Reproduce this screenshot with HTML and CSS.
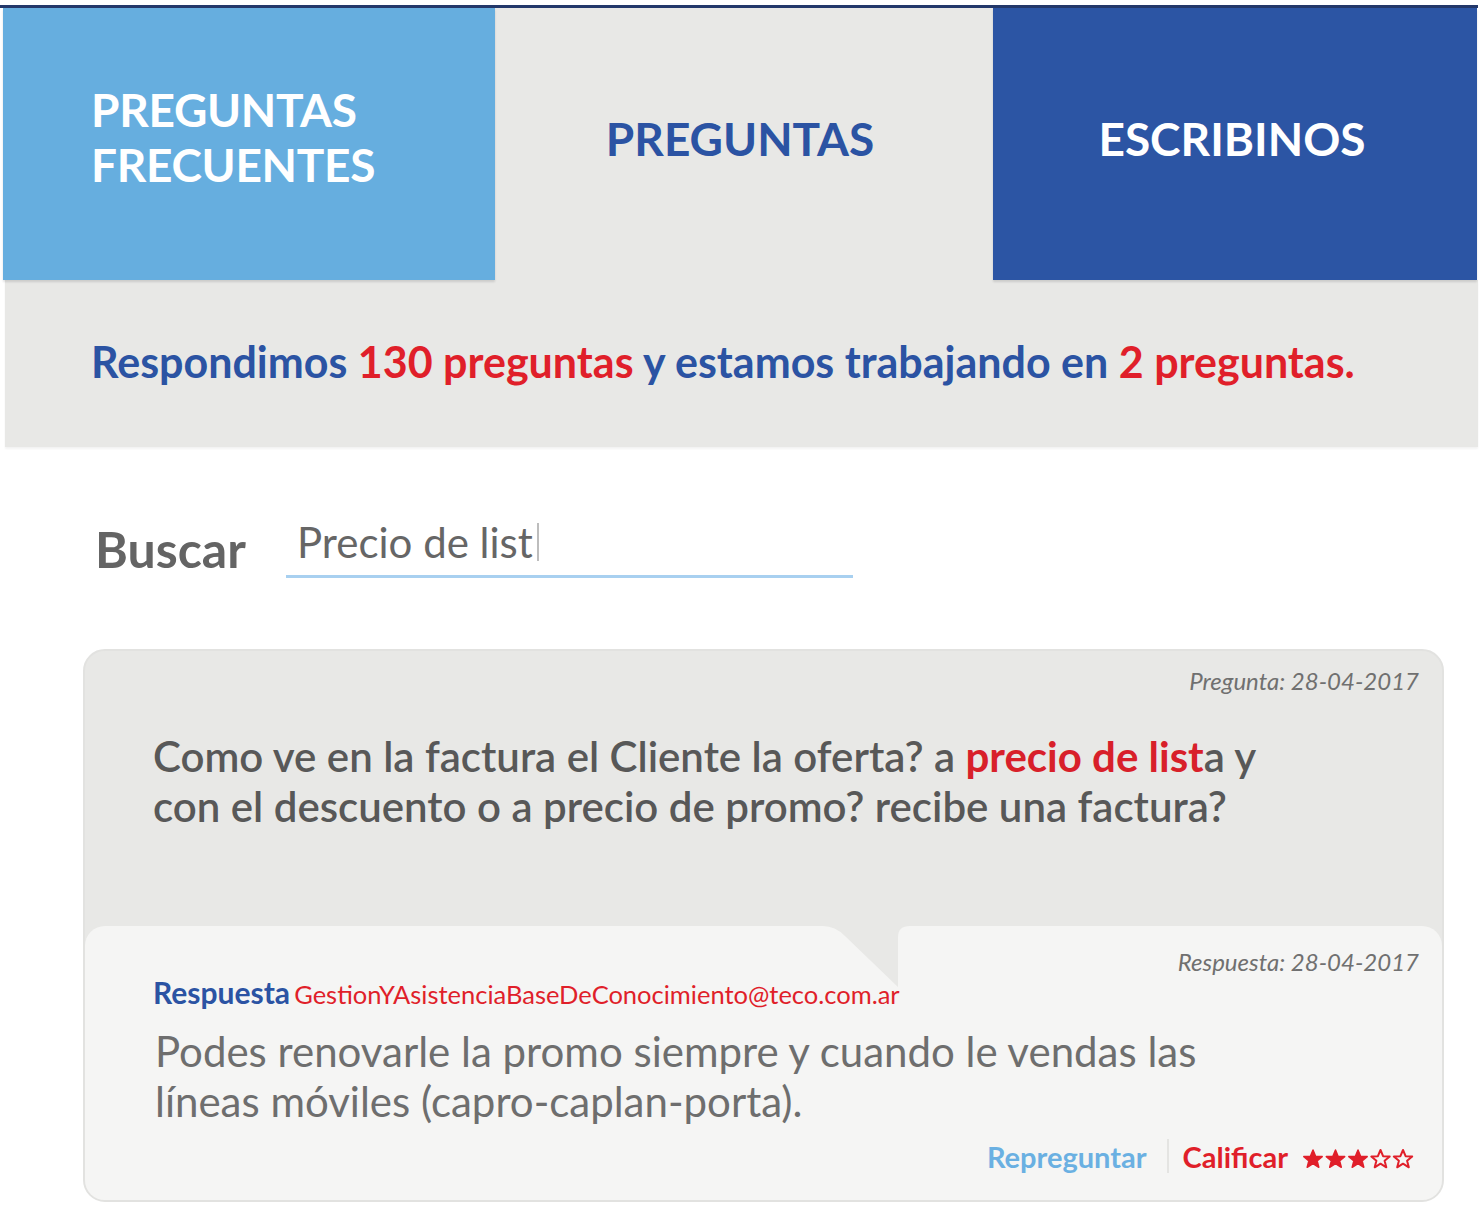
FILE: index.html
```html
<!DOCTYPE html>
<html lang="es">
<head>
<meta charset="utf-8">
<title>Preguntas</title>
<link rel="stylesheet" href="styles.css">
</head>
<body>
<div class="page">
  <div class="topline"></div>
  <nav class="tabs">
    <div class="tab tab-faq">PREGUNTAS<br>FRECUENTES</div>
    <div class="tab tab-questions">PREGUNTAS</div>
    <div class="tab tab-write">ESCRIBINOS</div>
  </nav>
  <div class="banner">
    <p class="banner-text">Respondimos <span class="red">130 preguntas</span> y estamos trabajando en <span class="red">2 preguntas.</span></p>
  </div>
  <div class="search">
    <span class="search-label">Buscar</span>
    <div class="search-field"><span class="search-value">Precio de list</span><span class="caret"></span></div>
  </div>
  <article class="card">
    <section class="question">
      <div class="date">Pregunta: 28-04-2017</div>
      <p class="question-text">Como ve en la factura el Cliente la oferta? a <span class="hl">precio de list</span>a y con el descuento o a precio de promo? recibe una factura?</p>
    </section>
    <section class="answer">
      <svg class="tail" width="90" height="62" viewBox="0 0 90 62"><path d="M0 0 Q12 0 22 10 L75 61 L75 11 Q75 0 87 0 Z" fill="#e8e8e6"/></svg>
      <div class="date date-answer">Respuesta: 28-04-2017</div>
      <div class="answer-head"><span class="answer-label">Respuesta</span> <span class="answer-mail">GestionYAsistenciaBaseDeConocimiento@teco.com.ar</span></div>
      <p class="answer-text">Podes renovarle la promo siempre y cuando le vendas las líneas móviles (capro-caplan-porta).</p>
      <div class="actions">
        <span class="repreguntar">Repreguntar</span>
        <span class="sep"></span>
        <span class="calificar">Calificar</span>
        <span class="stars">
          <svg width="112" height="22" viewBox="0 0 112 22">
            <g fill="#e01f2a" stroke="#e01f2a" stroke-width="1.5" stroke-linejoin="round">
              <path d="M11 2 L13.6 8.2 L20.2 8.6 L15.1 12.8 L16.8 19.3 L11 15.7 L5.2 19.3 L6.9 12.8 L1.8 8.6 L8.4 8.2 Z"/>
              <path transform="translate(22.5 0)" d="M11 2 L13.6 8.2 L20.2 8.6 L15.1 12.8 L16.8 19.3 L11 15.7 L5.2 19.3 L6.9 12.8 L1.8 8.6 L8.4 8.2 Z"/>
              <path transform="translate(45 0)" d="M11 2 L13.6 8.2 L20.2 8.6 L15.1 12.8 L16.8 19.3 L11 15.7 L5.2 19.3 L6.9 12.8 L1.8 8.6 L8.4 8.2 Z"/>
            </g>
            <g fill="none" stroke="#e01f2a" stroke-width="2" stroke-linejoin="round">
              <path transform="translate(67.5 0)" d="M11 2 L13.6 8.2 L20.2 8.6 L15.1 12.8 L16.8 19.3 L11 15.7 L5.2 19.3 L6.9 12.8 L1.8 8.6 L8.4 8.2 Z"/>
              <path transform="translate(90 0)" d="M11 2 L13.6 8.2 L20.2 8.6 L15.1 12.8 L16.8 19.3 L11 15.7 L5.2 19.3 L6.9 12.8 L1.8 8.6 L8.4 8.2 Z"/>
            </g>
          </svg>
        </span>
      </div>
    </section>
  </article>
</div>
</body>
</html>
```
FILE: styles.css
```css
* { box-sizing: border-box; }
html, body { margin: 0; padding: 0; background: #ffffff; }
body { font-family: Lato, "Open Sans", "Liberation Sans", sans-serif; width: 1484px; }

.page { padding-top: 5px; }

.topline { height: 3px; background: #23386a; margin-right: 6px; }

.tabs {
  display: grid;
  grid-template-columns: 492px 498px 484px;
  margin-left: 3px;
  height: 272px;
}
.tab {
  display: flex;
  align-items: center;
  font-weight: 700;
  font-size: 46px;
  line-height: 55px;
  padding-bottom: 12px;
}
.tab-faq { background: #66aedf; color: #ffffff; padding-left: 88px; padding-bottom: 14px; box-shadow: 0 2px 2px rgba(0,0,0,0.12); z-index: 1; letter-spacing: -0.3px; }
.tab-questions { background: #e8e8e6; color: #2b53a3; justify-content: center; padding-right: 8px; }
.tab-write { background: #2c55a4; color: #ffffff; justify-content: center; padding-right: 6px; box-shadow: 0 2px 2px rgba(0,0,0,0.12); z-index: 1; }

.banner {
  margin-left: 5px;
  width: 1473px;
  height: 167px;
  background: #e8e8e6;
  display: flex;
  align-items: center;
  padding-left: 86px;
  box-shadow: 0 2px 2px rgba(0,0,0,0.05);
}
.banner-text {
  margin: 0;
  font-weight: 700;
  font-size: 43px;
  color: #2b53a3;
  padding-bottom: 4px;
}
.red { color: #e01f2a; }

.search {
  display: flex;
  align-items: flex-end;
  margin-top: 72px;
  padding-left: 95px;
  height: 58px;
}
.search-label {
  font-weight: 700;
  font-size: 50px;
  color: #646464;
  width: 191px;
  line-height: 44px;
  padding-bottom: 6px;
}
.search-field {
  width: 567px;
  border-bottom: 3px solid #a8d0f0;
  padding-left: 11px;
  display: flex;
  align-items: center;
  height: 56px;
  margin-bottom: -1px;
}
.search-value {
  font-size: 42px;
  color: #666666;
  line-height: 44px;
  padding-bottom: 14px;
}
.caret { width: 2px; height: 38px; background: #bdbdbd; margin-left: 4px; margin-bottom: 14px; }

.card {
  margin: 72px 0 0 83px;
  width: 1361px;
  height: 553px;
  border-radius: 22px;
  background: #e8e8e6;
  border: 2px solid #e2e2e0;
  overflow: hidden;
  display: flex;
  flex-direction: column;
}
.question {
  height: 275px;
  padding: 16px 23px 0 68px;
}
.date {
  text-align: right;
  font-style: italic;
  font-size: 24px;
  color: #707070;
  line-height: 28px;
}
.question-text {
  margin: 36px 0 0;
  width: 1135px;
  font-size: 42px;
  font-weight: 600;
  line-height: 50px;
  color: #585858;
}
.hl { color: #d8202a; font-weight: 700; }

.answer {
  position: relative;
  flex: 1;
  background: #f5f5f4;
  border-radius: 20px 20px 0 0;
  padding: 22px 23px 0 68px;
}
.tail { position: absolute; left: 738px; top: 0; }
.date-answer { position: relative; }
.answer-head { margin-top: -2px; line-height: 36px; }
.answer-label { font-weight: 700; font-size: 30px; color: #2b53a3; }
.answer-mail { font-size: 25.5px; color: #e01f2a; }
.answer-text {
  margin: 10px 0 0 2px;
  width: 1100px;
  font-size: 42px;
  line-height: 50px;
  color: #6e6e6e;
}
.actions {
  display: flex;
  justify-content: flex-end;
  align-items: center;
  margin-top: 12px;
  padding-right: 5px;
  height: 36px;
}
.repreguntar { font-weight: 700; font-size: 29px; color: #6ab0e2; }
.sep { width: 2px; height: 34px; background: #e4e4e2; margin: 0 14px 0 20px; }
.calificar { font-weight: 700; font-size: 29px; color: #e01f2a; }
.stars { margin-left: 14px; display: flex; padding-top: 6px; }
```
